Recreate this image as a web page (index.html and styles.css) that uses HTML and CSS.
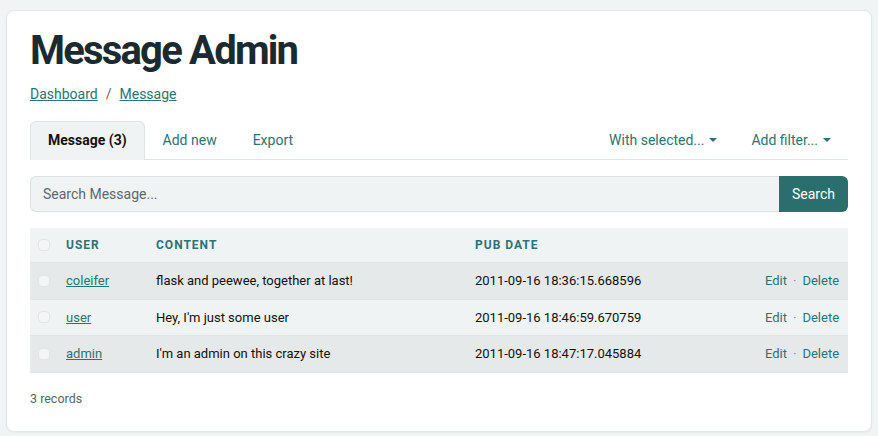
FILE: index.html
```html
<!DOCTYPE html>
<html lang="en">
<head>
<meta charset="utf-8">
<title>Message Admin</title>
<link rel="stylesheet" href="styles.css">
</head>
<body>
<div class="card">
  <h1 class="title">Message Admin</h1>
  <nav class="crumbs"><a href="#">Dashboard</a><span class="slash">/</span><a href="#">Message</a></nav>
  <div class="tabbar">
    <div class="tabs">
      <a class="tab active" href="#">Message (3)</a>
      <a class="tab" href="#">Add new</a>
      <a class="tab" href="#">Export</a>
    </div>
    <div class="tabs">
      <a class="tab dropdown" href="#">With selected...</a>
      <a class="tab dropdown" href="#">Add filter...</a>
    </div>
  </div>
  <form class="search">
    <input class="search-input" type="text" placeholder="Search Message...">
    <button class="search-btn" type="button">Search</button>
  </form>
  <table class="grid">
    <colgroup>
      <col class="c-check"><col class="c-user"><col class="c-content"><col class="c-date"><col class="c-actions">
    </colgroup>
    <thead>
      <tr>
        <th><span class="box"></span></th>
        <th>User</th>
        <th>Content</th>
        <th>Pub Date</th>
        <th></th>
      </tr>
    </thead>
    <tbody>
      <tr>
        <td><span class="box"></span></td>
        <td><a href="#">coleifer</a></td>
        <td>flask and peewee, together at last!</td>
        <td>2011-09-16 18:36:15.668596</td>
        <td class="actions"><a href="#">Edit</a><span class="sep">·</span><a href="#">Delete</a></td>
      </tr>
      <tr>
        <td><span class="box"></span></td>
        <td><a href="#">user</a></td>
        <td>Hey, I'm just some user</td>
        <td>2011-09-16 18:46:59.670759</td>
        <td class="actions"><a href="#">Edit</a><span class="sep">·</span><a href="#">Delete</a></td>
      </tr>
      <tr>
        <td><span class="box"></span></td>
        <td><a href="#">admin</a></td>
        <td>I'm an admin on this crazy site</td>
        <td>2011-09-16 18:47:17.045884</td>
        <td class="actions"><a href="#">Edit</a><span class="sep">·</span><a href="#">Delete</a></td>
      </tr>
    </tbody>
  </table>
  <p class="count">3 records</p>
</div>
</body>
</html>
```
FILE: styles.css
```css
* { box-sizing: border-box; }
html, body { margin: 0; }
body {
  background: #f1f4f5;
  padding: 10px 6px 4px;
  font-family: Roboto, "Liberation Sans", Arial, sans-serif;
  font-size: 14px;
  line-height: 1.5;
  color: #1a1d1e;
}
a { color: #2a7375; }
.card {
  background: #fff;
  border: 1px solid #e2e7e9;
  border-radius: 8px;
  box-shadow: 0 1px 2px rgba(0,0,0,0.04);
  padding: 16px 23px 23px;
}
.title {
  margin: 0;
  font-size: 40px;
  line-height: 48px;
  font-weight: 700;
  letter-spacing: -1.8px;
  color: #1b2a2e;
}
.crumbs {
  margin-top: 9px;
  font-size: 14px;
  line-height: 21px;
}
.crumbs a { text-decoration: underline; }
.slash { color: #5d676a; margin: 0 8px; }
.tabbar {
  margin-top: 16px;
  display: flex;
  justify-content: space-between;
  border-bottom: 1px solid #dfe3e5;
}
.tabs { display: flex; }
.tab {
  display: block;
  padding: 8px 17px 9px;
  border: 1px solid transparent;
  border-bottom: 0;
  border-radius: 6px 6px 0 0;
  text-decoration: none;
  color: #2a7375;
  font-size: 14px;
  line-height: 21px;
  margin-bottom: -1px;
}
.tab.active {
  background: #f0f3f4;
  border-color: #dfe3e5;
  color: #111;
  font-weight: 700;
}
.tab.dropdown { padding: 8px 16px 9px; }
.dropdown::after {
  content: "";
  display: inline-block;
  margin-left: 5px;
  vertical-align: 3px;
  border-top: 4px solid #2a7375;
  border-left: 4px solid transparent;
  border-right: 4px solid transparent;
}
.search {
  margin: 16px 0 0;
  display: flex;
  height: 36px;
}
.search-input {
  flex: 1;
  min-width: 0;
  background: #f0f3f4;
  border: 1px solid #dce1e3;
  border-right: 0;
  border-radius: 6px 0 0 6px;
  padding: 0 12px;
  font: inherit;
  font-size: 14px;
  color: #222;
}
.search-input::placeholder { color: #5e676b; }
.search-btn {
  background: #2a6f6d;
  color: #fff;
  border: 0;
  border-radius: 0 6px 6px 0;
  padding: 0 13px;
  font: inherit;
  font-size: 14px;
}
.grid {
  margin-top: 16px;
  width: 100%;
  border-collapse: collapse;
  table-layout: fixed;
  font-size: 13px;
}
.c-check { width: 28px; }
.c-user { width: 90px; }
.c-content { width: 319px; }
.c-date { width: 290px; }
.grid th, .grid td {
  padding: 8px;
  text-align: left;
  vertical-align: middle;
  line-height: 19.5px;
  white-space: nowrap;
}
.grid thead tr { background: #f0f3f4; border-bottom: 1px solid #e2e6e8; }
.grid th {
  font-size: 12px;
  line-height: 18px;
  font-weight: 700;
  text-transform: uppercase;
  letter-spacing: 1px;
  color: #2b7377;
}
.grid tbody tr { border-bottom: 1px solid #e0e4e6; }
.grid tbody tr:nth-child(odd) { background: #e6e9ea; }
.grid tbody tr:nth-child(even) { background: #f0f3f4; }
.grid td { color: #111; }
.box {
  display: block;
  width: 12px;
  height: 12px;
  border-radius: 4px;
  background: #f3f5f6;
  border: 1px solid #e1e5e7;
}
.grid td.actions { text-align: right; padding-right: 9px; }
.actions a { text-decoration: none; }
.sep { color: #7a8a8c; margin: 0 6px; }
.count {
  margin: 17px 0 0;
  font-size: 12.5px;
  line-height: 18.75px;
  color: #5a6467;
}
```
